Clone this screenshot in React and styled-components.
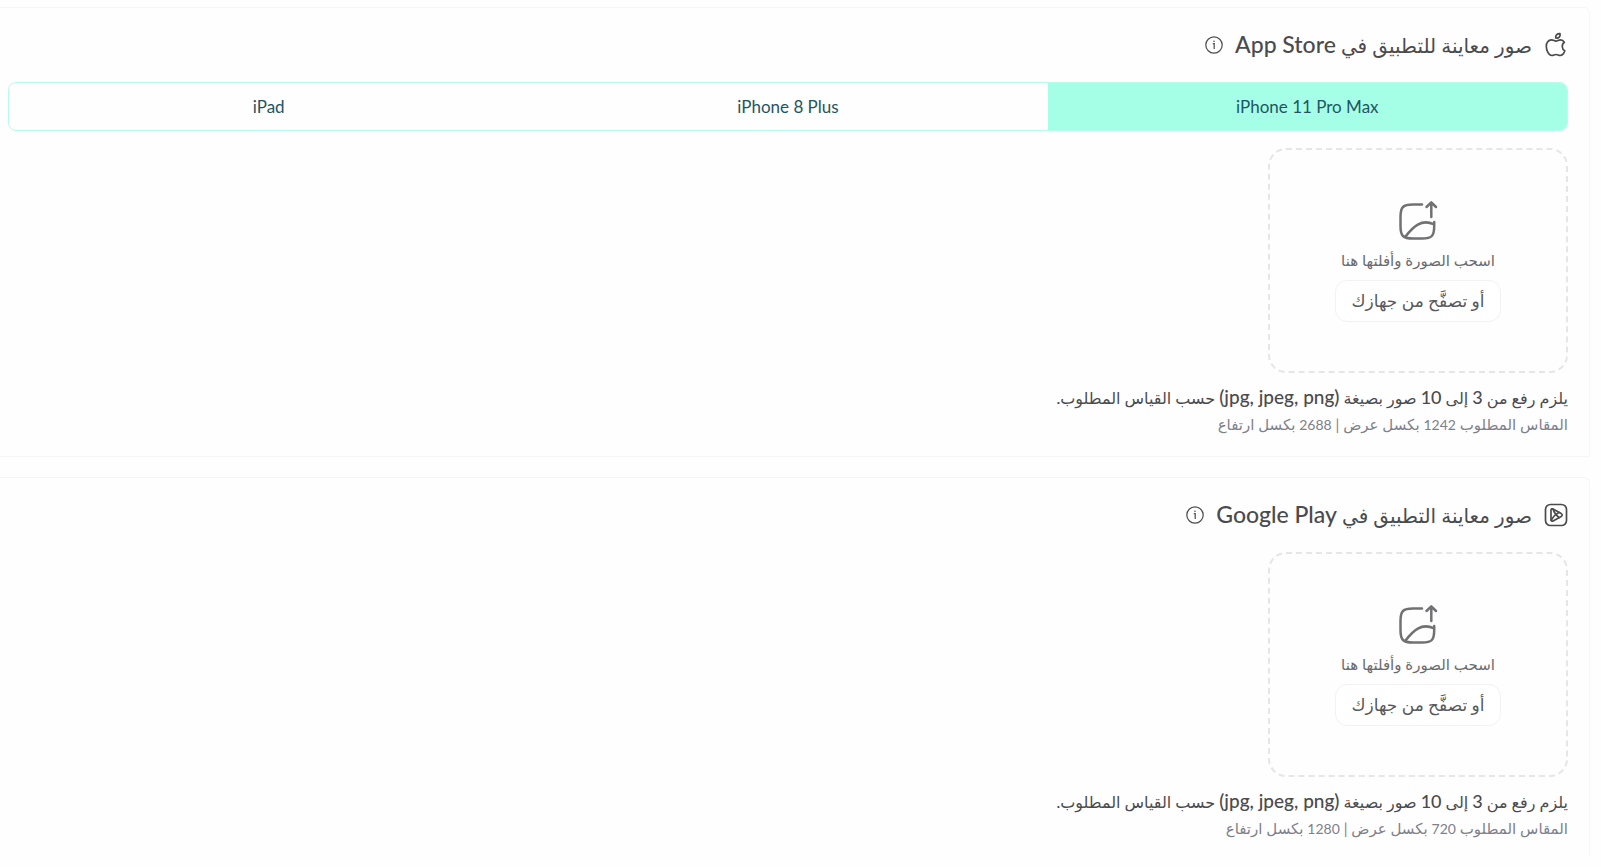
import React, { useState } from "react";
import styled, { createGlobalStyle } from "styled-components";

const GlobalStyle = createGlobalStyle`
  * { box-sizing: border-box; }
  body {
    margin: 0;
    background: #fefefe;
    color: #4b4b4d;
    font-family: Lato, "DejaVu Sans", sans-serif;
  }
  button { font-family: inherit; cursor: pointer; }
`;

const Page = styled.main`
  display: flex;
  flex-direction: column;
  gap: 20px;
  padding: 7px 0 10px;
  margin-right: 11px;
`;

const Panel = styled.section`
  padding: 24px 21px 20px 8px;
  border: 1px solid #f6f6f6;
  border-left: 0;
  border-radius: 0 6px 0 0;

  &:last-child {
    padding-bottom: 16px;
    border-bottom: 0;
  }
`;

const Header = styled.header`
  display: flex;
  align-items: center;
  gap: 12px;
  height: 26px;
  margin-bottom: 24px;
`;

const Title = styled.h2`
  margin: 0;
  font-size: 20px;
  font-weight: 500;
  line-height: 26px;
  white-space: nowrap;
`;

const Latin = styled.bdi`
  font-size: ${({ $size }) => $size}px;
  line-height: 1;
`;

const InfoButton = styled.button`
  display: flex;
  padding: 0;
  border: 0;
  background: none;
  color: #4b4b4d;
`;

const Tabs = styled.div`
  display: flex;
  height: 49px;
  margin-bottom: 17px;
  border: 1px solid #b4fdea;
  border-radius: 8px;
  overflow: hidden;
`;

const Tab = styled.button`
  flex: 1;
  padding: 0 0 1px;
  border: 0;
  background: ${({ $active }) => ($active ? "#a5ffe6" : "transparent")};
  color: #1f5563;
  font-size: 17px;
`;

const DropZone = styled.div`
  display: flex;
  flex-direction: column;
  align-items: center;
  justify-content: center;
  width: 300px;
  height: 225px;
  border: 2px dashed #e6e6e6;
  border-radius: 18px;
`;

const Hint = styled.p`
  margin: 8px 0;
  color: #6b6b6d;
  font-size: 15px;
  line-height: 24px;
`;

const BrowseButton = styled.button`
  height: 42px;
  padding: 0 16px;
  border: 1px solid #f2f2f2;
  border-radius: 12px;
  background: #fff;
  color: #58585a;
  font-size: 17px;
`;

const Requirement = styled.p`
  margin: 11px 0 0;
  font-size: 16px;
  font-weight: 500;
  line-height: 28px;
`;

const Dimensions = styled.p`
  margin: 0;
  color: #7e808c;
  font-size: 15px;
  line-height: 24px;
`;

const AppleIcon = () => (
  <svg width="24" height="26" viewBox="0 0 24 26" fill="none" stroke="currentColor" strokeWidth="1.7" strokeLinejoin="round" aria-hidden="true">
    <path d="M12 9.1C10.4 8.8 9.4 7.8 7.5 7.8C4.2 7.8 2.3 10.6 2.3 14.2C2.3 18.2 4.6 23.5 8 23.5C9.6 23.5 10.3 22.5 12 22.5C13.7 22.5 14.4 23.5 16 23.5C18.5 23.5 20.1 21.2 20.8 18.8C17.7 17.3 17.3 12.3 20.4 10.3C19.5 8.7 18 7.8 16.4 7.8C14.6 7.8 13.6 8.9 12 9.1Z" />
    <path d="M11.8 6C11.2 3.4 13 1.5 16 1.7C16.6 4.5 14.8 6.5 11.8 6Z" />
  </svg>
);

const PlayStoreIcon = () => (
  <svg width="24" height="24" viewBox="0 0 24 24" fill="none" stroke="currentColor" strokeWidth="1.7" strokeLinecap="round" strokeLinejoin="round" aria-hidden="true">
    <rect x="1.5" y="1.5" width="21" height="21" rx="5" />
    <path d="M7 7.3C7 5.8 8.2 5.4 9.5 6.2L17.2 10.6C18.5 11.4 18.5 12.6 17.2 13.4L9.5 17.8C8.2 18.6 7 18 7 16.7Z" />
    <path d="M7.3 17.5C8.5 14.3 11 11.5 15 9.4M9 6C10 9.3 12 12.2 15 14.6" />
  </svg>
);

const InfoIcon = () => (
  <svg width="18" height="18" viewBox="0 0 18 18" fill="none" stroke="currentColor" strokeWidth="1.2" aria-hidden="true">
    <circle cx="9" cy="9" r="8.2" />
    <path d="M7.8 7.7H9.2V13" />
    <circle cx="9" cy="5.3" r=".8" fill="currentColor" stroke="none" />
  </svg>
);

const UploadIcon = () => (
  <svg width="40" height="40" viewBox="0 0 40 40" fill="none" stroke="#717173" strokeWidth="2.5" strokeLinecap="round" strokeLinejoin="round" aria-hidden="true">
    <path d="M24 4.5H15C5 4.5 2.5 7 2.5 17V26C2.5 36 5 38.5 15 38.5H24C34 38.5 36.2 36 36.2 26V22" />
    <path d="M7.5 36.5C15 27 23.5 18.5 35.5 24.2M33.3 17V3M28.5 7L33.3 2.3L38 7" />
  </svg>
);

const devices = ["iPhone 11 Pro Max", "iPhone 8 Plus", "iPad"];

const DeviceTabs = () => {
  const [selected, setSelected] = useState(devices[0]);
  return (
    <Tabs role="tablist">
      {devices.map((device) => (
        <Tab
          key={device}
          type="button"
          role="tab"
          dir="ltr"
          aria-selected={device === selected}
          $active={device === selected}
          onClick={() => setSelected(device)}
        >
          {device}
        </Tab>
      ))}
    </Tabs>
  );
};

const PreviewPanel = ({ icon, title, store, width, height, children }) => (
  <Panel>
    <Header>
      {icon}
      <Title>
        {title} <Latin $size={23}>{store}</Latin>
      </Title>
      <InfoButton type="button" aria-label="معلومات">
        <InfoIcon />
      </InfoButton>
    </Header>
    {children}
    <DropZone>
      <UploadIcon />
      <Hint>اسحب الصورة وأفلتها هنا</Hint>
      <BrowseButton type="button">أو تصفَّح من جهازك</BrowseButton>
    </DropZone>
    <Requirement>
      يلزم رفع من <Latin $size={18}>3</Latin> إلى <Latin $size={18}>10</Latin> صور بصيغة{" "}
      <Latin $size={19}>(jpg, jpeg, png)</Latin> حسب القياس المطلوب.
    </Requirement>
    <Dimensions>
      المقاس المطلوب <Latin $size={14}>{width}</Latin> بكسل عرض | <Latin $size={14}>{height}</Latin> بكسل ارتفاع
    </Dimensions>
  </Panel>
);

export default function App() {
  return (
    <>
      <GlobalStyle />
      <Page dir="rtl" lang="ar">
        <PreviewPanel
          icon={<AppleIcon />}
          title="صور معاينة للتطبيق في"
          store="App Store"
          width={1242}
          height={2688}
        >
          <DeviceTabs />
        </PreviewPanel>
        <PreviewPanel
          icon={<PlayStoreIcon />}
          title="صور معاينة التطبيق في"
          store="Google Play"
          width={720}
          height={1280}
        />
      </Page>
    </>
  );
}
